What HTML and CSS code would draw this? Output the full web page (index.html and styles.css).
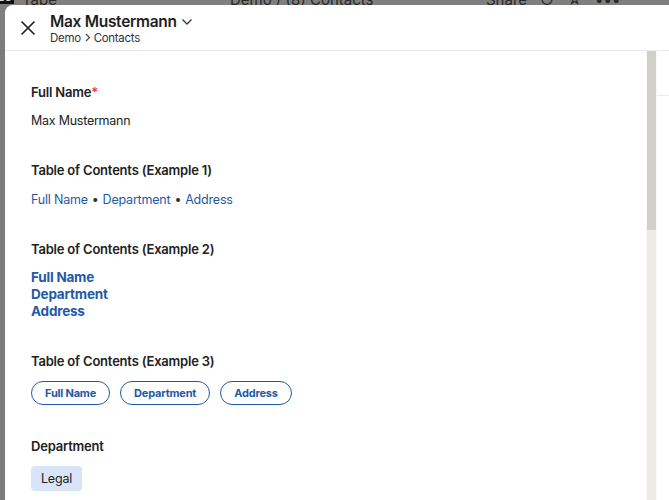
FILE: index.html
```html
<!DOCTYPE html>
<html>
<head>
    <title>Max Mustermann - Contacts</title>
    <link rel="stylesheet" href="styles.css">
</head>
<body>
    <!-- Halaman di belakang modal -->
    <div class="backdrop-bar">
        <span class="bd-corner">LO</span>
        <span class="bd-left">Tape ^</span>
        <span class="bd-mid">Demo / (8) Contacts</span>
        <span class="bd-right">Share &nbsp; &#8634; &nbsp; &#9734; &nbsp; &bull;&bull;&bull;</span>
    </div>

    <!-- Modal -->
    <div class="modal">
        <div class="modal-header">
            <button class="close-btn" aria-label="Close">
                <svg width="16" height="16" viewBox="0 0 16 16">
                    <path d="M2 2 L14 14 M14 2 L2 14" stroke="#222" stroke-width="1.7" fill="none" stroke-linecap="round"/>
                </svg>
            </button>
            <div class="title-block">
                <div class="title">Max Mustermann
                    <svg class="chevron" width="12" height="8" viewBox="0 0 12 8">
                        <path d="M1.5 1.5 L6 6 L10.5 1.5" stroke="#333" stroke-width="1.3" fill="none"/>
                    </svg>
                </div>
                <div class="crumbs">Demo
                    <svg width="7" height="9" viewBox="0 0 7 9">
                        <path d="M2 1 L5.5 4.5 L2 8" stroke="#444" stroke-width="1.1" fill="none"/>
                    </svg>
                    Contacts</div>
            </div>
        </div>

        <div class="modal-body">
            <div class="content">
                <div class="field">
                    <div class="label">Full Name<span class="req">*</span></div>
                    <div class="value">Max Mustermann</div>
                </div>

                <div class="field">
                    <div class="label">Table of Contents (Example 1)</div>
                    <div class="value toc-inline">
                        <a href="#">Full Name</a><span class="dot">&bull;</span><a href="#">Department</a><span class="dot">&bull;</span><a href="#">Address</a>
                    </div>
                </div>

                <div class="field field-list">
                    <div class="label">Table of Contents (Example 2)</div>
                    <div class="toc-list">
                        <a href="#">Full Name</a>
                        <a href="#">Department</a>
                        <a href="#">Address</a>
                    </div>
                </div>

                <div class="field field-pills">
                    <div class="label">Table of Contents (Example 3)</div>
                    <div class="toc-pills">
                        <a href="#">Full Name</a>
                        <a href="#">Department</a>
                        <a href="#">Address</a>
                    </div>
                </div>

                <div class="field">
                    <div class="label">Department</div>
                    <div class="chips">
                        <span class="chip">Legal</span>
                    </div>
                </div>
            </div>
            <div class="scrollbar"><div class="thumb"></div></div>
            <div class="side-panel"><div class="side-head"></div></div>
        </div>
    </div>
</body>
</html>
```

FILE: styles.css
```css
body {
    font-family: Inter, "Liberation Sans", Arial, sans-serif;
    margin: 0;
    padding: 0;
    background-color: #7b7b79;
    height: 500px;
    overflow: hidden;
    color: #222;
}

/* Halaman belakang (redup) */
.backdrop-bar {
    height: 40px;
    position: relative;
    color: #2a2a2a;
    font-size: 15px;
    background-color: #7f7f7d;
}

.backdrop-bar span {
    position: absolute;
    top: -10px;
}

.bd-corner {
    left: -4px;
    background-color: #111;
    color: #ddd;
    font-size: 11px;
    padding: 0 2px;
}
.bd-left { left: 22px; }
.bd-mid { left: 230px; }
.bd-right { left: 486px; }

/* Modal */
.modal {
    position: absolute;
    top: 5px;
    left: 5px;
    right: 0;
    bottom: 0;
    background-color: #fff;
    border-top-left-radius: 8px;
    display: flex;
    flex-direction: column;
    overflow: hidden;
}

.modal-header {
    height: 45px;
    border-bottom: 1px solid #ebebeb;
    display: flex;
    align-items: flex-start;
    flex-shrink: 0;
}

.close-btn {
    background: transparent;
    border: none;
    padding: 0;
    margin: 15px 0 0 15px;
    width: 16px;
    height: 16px;
    cursor: pointer;
}

.title-block {
    margin-left: 14px;
    margin-top: 6px;
}

.title {
    font-size: 15.5px;
    font-weight: 600;
    line-height: 21px;
    letter-spacing: -0.3px;
    color: #1e1e1e;
}

.chevron {
    margin-left: 1px;
    vertical-align: 1px;
}

.crumbs {
    font-size: 11.5px;
    line-height: 13px;
    letter-spacing: -0.3px;
    color: #333;
}

.modal-body {
    flex: 1;
    display: flex;
    min-height: 0;
}

.content {
    flex: 1;
    padding: 31px 26px 0 26px;
}

.field {
    margin-bottom: 29px;
}

.field-list {
    margin-bottom: 31px;
}

.field-pills {
    margin-bottom: 31px;
}

.label {
    font-size: 13px;
    font-weight: 600;
    line-height: 20px;
    letter-spacing: -0.2px;
    color: #222;
}

.req {
    color: #e0413a;
}

.value {
    margin-top: 9px;
    font-size: 12.5px;
    line-height: 20px;
    letter-spacing: -0.25px;
    color: #222;
}

a {
    color: #1f5aa6;
    text-decoration: none;
}

.toc-inline {
    margin-top: 10px;
}

.toc-inline a {
    letter-spacing: -0.2px;
}

.toc-inline .dot {
    color: #333;
    margin: 0 4px;
}

.toc-list {
    margin-top: 10px;
    display: flex;
    flex-direction: column;
}

.toc-list a {
    font-size: 13.5px;
    font-weight: 700;
    line-height: 17px;
    letter-spacing: -0.2px;
}

.toc-pills {
    margin-top: 10px;
    display: flex;
    gap: 10px;
}

.toc-pills a {
    border: 1px solid #1f5aa6;
    border-radius: 12px;
    height: 22px;
    line-height: 22px;
    padding: 0 13px;
    font-size: 11px;
    font-weight: 700;
    letter-spacing: -0.2px;
}

.chips {
    margin-top: 10px;
    display: flex;
}

.chip {
    background-color: #d8e5f8;
    border-radius: 4px;
    padding: 0 10px;
    height: 25px;
    line-height: 25px;
    font-size: 12.5px;
    letter-spacing: -0.2px;
    color: #222;
}

/* Scrollbar */
.scrollbar {
    width: 9px;
    background-color: #ecebe7;
    border-left: 1px solid #f7f7f5;
    border-right: 1px solid #f7f7f5;
}

.thumb {
    height: 179px;
    background-color: #d1d0cb;
}

.side-panel {
    width: 12px;
    background-color: #fff;
}

.side-head {
    height: 44px;
    border-bottom: 1px solid #ececec;
}
```
